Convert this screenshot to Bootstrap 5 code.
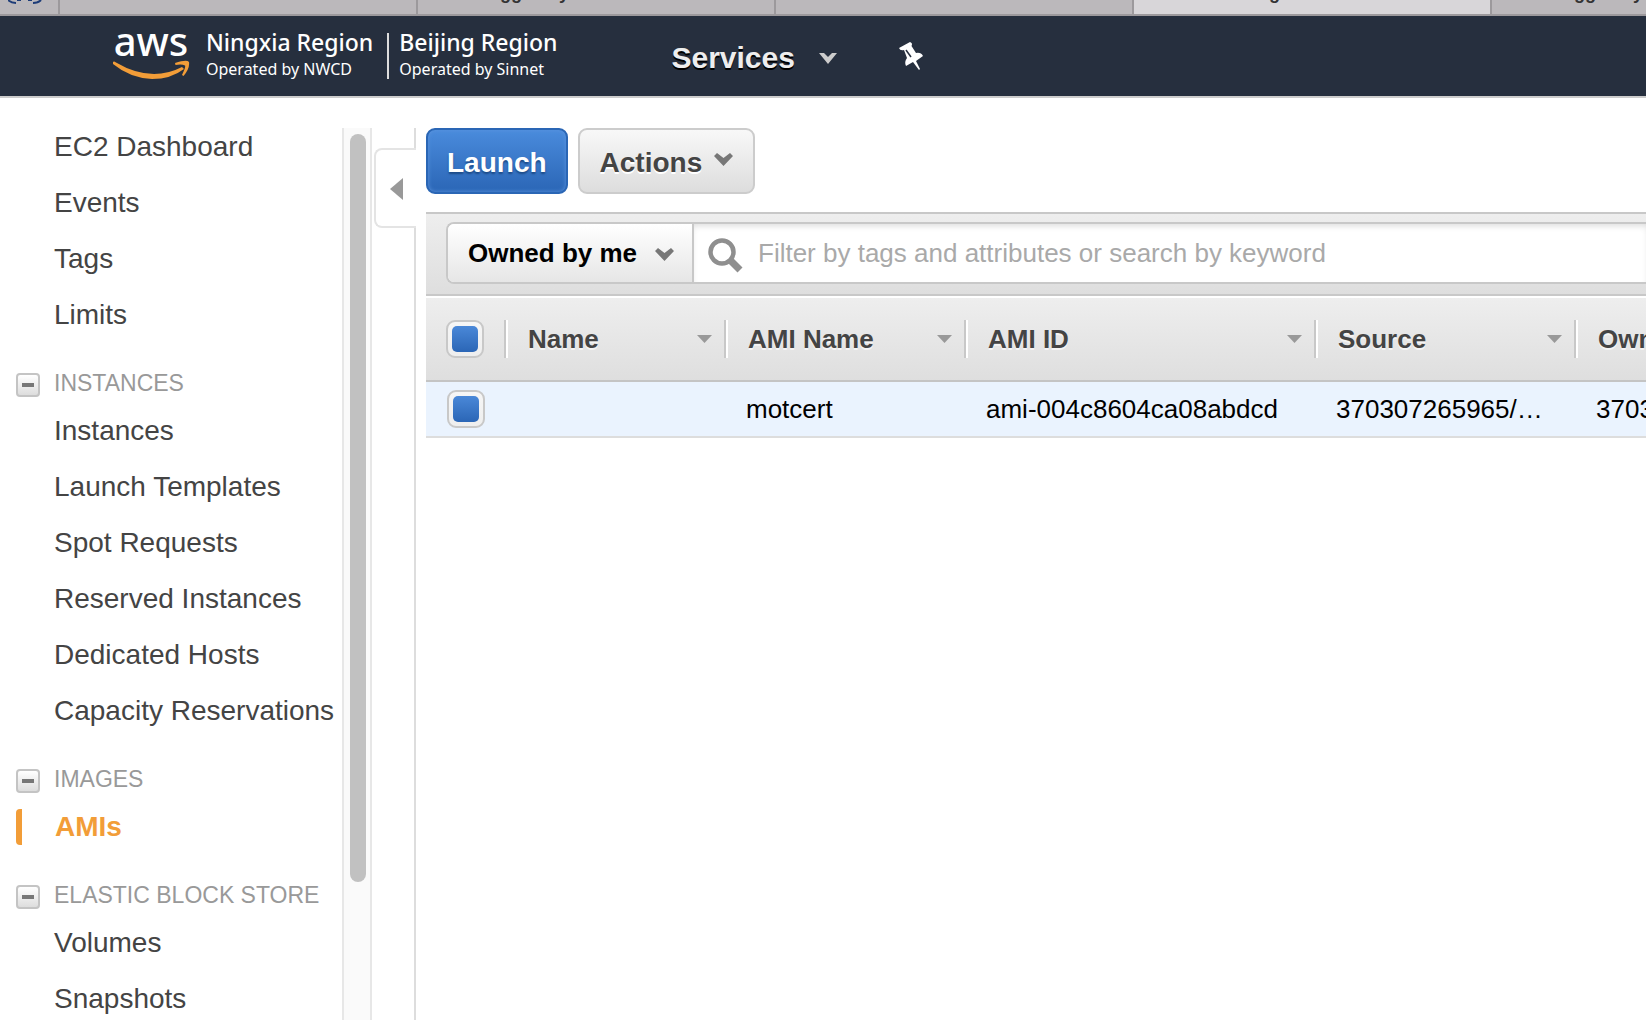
<!DOCTYPE html>
<html lang="en">
<head>
<meta charset="utf-8">
<meta name="viewport" content="width=device-width, initial-scale=1">
<title>EC2 Management Console</title>
<link rel="stylesheet" href="https://cdn.jsdelivr.net/npm/bootstrap@5.3.0/dist/css/bootstrap.min.css">
<style>
body{font-family:"Liberation Sans",Arial,sans-serif;color:#444;background:#fff}
svg{display:block;flex:none}
/* browser tab strip */
.tabstrip{height:16px;background:#bbb8bb;border-bottom:2px solid #9c999c}
.tabstrip a{flex:0 0 358px;border-left:2px solid #9c999c;padding:0 0 11px 60px;font-size:18px;line-height:20px;font-weight:700;color:#333;height:14px}
.tabstrip a.on{background:#d8d6d9;padding-left:94px}
.tabstrip .pinned{flex:0 0 58px;padding-left:8px}
/* top navigation */
.topnav{height:82px;background:#262f3e;border-bottom:2px solid #ccc;padding-left:112px}
.brandfont{font-family:"Noto Sans","Open Sans",sans-serif;color:#fff}
.logo{width:78px;margin-bottom:10px}
.logo-word{font-size:40px;line-height:38px;font-weight:500;text-align:center}
.region-block{margin-bottom:4px}
.region{font-size:23px;line-height:30px;font-weight:500}
.operator{font-size:16px;line-height:25px}
.region-rule{width:2px;height:46px;margin:0 10px 0 14px;background:#ddd}
.services{margin-left:114px;font-size:30px;line-height:36px;font-weight:700;color:#eee;text-shadow:0 2px 0 #000}
.pin{margin-left:62px}
/* sidebar */
.sidebar{flex:0 0 342px;padding-top:21px}
.sidebar a{display:block;font-size:28px;line-height:56px;padding-left:54px;color:#444;text-decoration:none;white-space:nowrap}
.group-head{padding:20px 0 0 16px;gap:14px;font-size:23px;line-height:40px;color:#999}
.toggle-btn{width:24px;height:24px;margin-bottom:6px;border:2px solid #c4c4c4;border-radius:4px;background:linear-gradient(#fff,#ddd)}
.toggle-btn i{width:12px;height:4px;background:#777}
.sidebar a.current{display:flex;align-items:center;padding-left:16px;gap:33px;color:#f29d38;font-weight:700}
.current::before{content:"";width:6px;height:36px;background:#f29d38;border-radius:4px 0 0 4px}
.track{flex:0 0 30px;margin-top:30px;padding:6px 0 0 6px;background:#fafafa;border:solid #e7e7e7;border-width:0 2px}
.thumb{width:16px;height:748px;border-radius:8px;background:#c1c1c1}
.collapser{flex:0 0 44px;margin-top:30px}
.edge{border-right:2px solid #ddd}
.collapse-btn{width:42px;height:80px;border:2px solid #e4e4e4;border-right:0;border-radius:8px 0 0 8px;background:#fff;padding:2px 0 0 14px}
/* main panel */
.panel{padding:30px 0 0 10px;min-width:0}
.actions-row{gap:10px}
.cbtn{height:66px;border:2px solid #ccc;border-radius:9px;padding:3px 20px 0;font-size:28px;font-weight:700;line-height:32px;color:#444;background:linear-gradient(#f8f8f8,#ddd);text-shadow:0 2px 0 #fff}
.cbtn-blue{padding:3px 19px 0;color:#fff;border-color:#2a66b5;background:linear-gradient(#4a8bdc,#2b66b6);text-shadow:0 2px 2px #1c4a86;box-shadow:inset 0 0 4px #5b94de}
.cbtn-menu{gap:12px}
.cbtn-menu svg{margin-bottom:6px}
.filterbar{margin-top:18px;height:84px;padding:8px 0 0 20px;border:solid #c8c8c8;border-width:2px 0;background:linear-gradient(#eee,#dedede)}
.filterbox{height:62px;border:2px solid #c8c8c8;border-right:0;border-radius:8px 0 0 8px;background:#fff;overflow:hidden}
.owner-pick{width:246px;height:58px;border:0;border-right:2px solid #c8c8c8;border-radius:0;appearance:none;background:linear-gradient(#fff,#e6e6e6);padding:0 0 0 20px;font-size:26px;font-weight:700;color:#000}
.pick-arrow{position:absolute;right:20px;top:24px;pointer-events:none}
.search{gap:15px;padding-left:14px;box-shadow:inset 0 4px 6px -2px #ddd}
.search svg{margin-top:4px}
.search input{border:0;outline:0;background:none;font-size:26px;color:#000;height:58px;padding:0;min-width:0}
.search input::placeholder{color:#a9a9a9;opacity:1}
.images{table-layout:fixed;width:100%;min-width:1348px;margin-top:2px;border-collapse:separate;border-spacing:0;font-size:26px;white-space:nowrap}
.images th{height:84px;padding:0;border-bottom:2px solid #c4c4c4}
.images thead{background:linear-gradient(#eee,#dedede)}
.images td{height:56px;padding:0 0 0 22px;background:#eaf3fe;color:#000;border-bottom:2px solid #ddd}
.th-in{height:38px;border-left:2px solid #c8c8c8;box-shadow:inset 2px 0 0 #fff;padding:0 12px 0 22px;text-shadow:0 2px 0 #f4f4f4}
.tick{appearance:none;display:block;width:38px;height:38px;margin:0 0 0 20px;border:2px solid #c8c8c8;border-radius:9px;padding:4px;background:linear-gradient(#f6f6f6,#eee)}
.tick:checked::before{content:"";display:block;width:26px;height:26px;border-radius:5px;background:linear-gradient(#4a88d8,#2b66b6)}
.images td.pick{padding:0 0 0 1px}
</style>
</head>
<body class="vh-100 overflow-hidden d-flex flex-column">

<nav class="tabstrip d-flex overflow-hidden flex-shrink-0" aria-label="Browser tabs">
  <span class="pinned">
    <svg width="34" height="5" viewBox="0 0 34 5" fill="none" stroke="#1d3c78" stroke-width="2"><path d="M0 0Q3 3 8 3M33 0Q30 3 25 3M9 0H13M20 0H24"/></svg>
  </span>
  <a class="d-flex align-items-end text-decoration-none" href="#" aria-label="Tab"></a>
  <a class="d-flex align-items-end text-decoration-none" href="#">Logged by</a>
  <a class="d-flex align-items-end text-decoration-none" href="#" aria-label="Tab"></a>
  <a class="d-flex align-items-end text-decoration-none on" href="#">&nbsp; Images</a>
  <a class="d-flex align-items-end text-decoration-none" href="#">Logged by</a>
</nav>

<header class="topnav d-flex align-items-center flex-shrink-0">
  <a class="logo brandfont text-decoration-none" href="#" aria-label="aws">
    <div class="logo-word">aws</div>
    <svg width="78" height="20" viewBox="0 0 78 20" fill="#f29d38"><path d="M1 2Q2 1 4 2.500Q39 23 70 7L72 9Q59 19 40 19Q18 18 1 4Z"/><path d="M63 3Q75-1 77 2Q78 8 71.500 16L70 15Q74 7 73 5.500Q70 4 63.500 5Z"/></svg>
  </a>
  <div class="region-block brandfont ms-3 text-nowrap">
    <div class="region">Ningxia Region</div>
    <div class="operator">Operated by NWCD</div>
  </div>
  <div class="region-rule"></div>
  <div class="region-block brandfont text-nowrap">
    <div class="region">Beijing Region</div>
    <div class="operator">Operated by Sinnet</div>
  </div>
  <button class="services btn d-flex align-items-center p-0 mt-1 border-0 gap-4" type="button">Services
    <svg width="18" height="11" viewBox="0 0 18 11" fill="#ccc"><path d="M0 0H5L9 4L13 0H18L9 11Z"/></svg>
  </button>
  <button class="pin btn p-0 border-0" type="button" aria-label="Pin services">
    <svg width="24" height="28" viewBox="0 0 24 28" fill="#fff"><path d="M0 6L11 0Q14 1 12.500 4L17 11Q22 10 24 14L17 19L21 27L20 28L14 20L7 24Q5 20 8 16L5 8Q1 9 0 6Z"/><path d="M7 8L12 15" stroke="#262f3e" stroke-width="1.500"/></svg>
  </button>
</header>

<div class="d-flex flex-grow-1 overflow-hidden">
  <nav class="sidebar overflow-hidden" aria-label="EC2">
    <a href="#">EC2 Dashboard</a>
    <a href="#">Events</a>
    <a href="#">Tags</a>
    <a href="#">Limits</a>
    <div class="group-head d-flex align-items-end"><button class="toggle-btn d-flex align-items-center justify-content-center p-0" type="button" aria-label="Collapse Instances"><i></i></button>INSTANCES</div>
    <a href="#">Instances</a>
    <a href="#">Launch Templates</a>
    <a href="#">Spot Requests</a>
    <a href="#">Reserved Instances</a>
    <a href="#">Dedicated Hosts</a>
    <a href="#">Capacity Reservations</a>
    <div class="group-head d-flex align-items-end"><button class="toggle-btn d-flex align-items-center justify-content-center p-0" type="button" aria-label="Collapse Images"><i></i></button>IMAGES</div>
    <a class="current" href="#" aria-current="page">AMIs</a>
    <div class="group-head d-flex align-items-end"><button class="toggle-btn d-flex align-items-center justify-content-center p-0" type="button" aria-label="Collapse Elastic Block Store"><i></i></button>ELASTIC BLOCK STORE</div>
    <a href="#">Volumes</a>
    <a href="#">Snapshots</a>
  </nav>
  <div class="track"><div class="thumb"></div></div>
  <div class="collapser d-flex flex-column align-items-end">
    <div class="edge pt-3 pb-1"></div>
    <button class="collapse-btn d-flex align-items-center flex-shrink-0" type="button" aria-label="Hide navigation">
      <svg width="13" height="22" viewBox="0 0 13 22" fill="#999"><path d="M13 0V22L0 11Z"/></svg>
    </button>
    <div class="edge flex-grow-1"></div>
  </div>

  <main class="panel flex-grow-1 overflow-hidden">
    <div class="d-flex actions-row">
      <button class="cbtn cbtn-blue" type="button">Launch</button>
      <button class="cbtn cbtn-menu d-flex align-items-center" type="button">Actions
        <svg width="19" height="13" viewBox="0 0 19 13" fill="#777"><path d="M0 3L3 0L9.500 5L16 0L19 3L9.500 13Z"/></svg>
      </button>
    </div>
    <div class="filterbar">
      <div class="filterbox d-flex">
        <div class="position-relative">
          <select class="owner-pick" aria-label="Ownership"><option>Owned by me</option></select>
          <svg class="pick-arrow" width="19" height="13" viewBox="0 0 19 13" fill="#777"><path d="M0 3L3 0L9.500 5L16 0L19 3L9.500 13Z"/></svg>
        </div>
        <label class="search d-flex align-items-center flex-grow-1">
          <svg width="35" height="35" viewBox="0 0 35 35" fill="none" stroke="#8f8f8f"><circle cx="14" cy="14" r="11.500" stroke-width="4.500"/><path d="M22 22L32 32" stroke-width="7"/></svg>
          <input class="flex-grow-1" type="text" aria-label="Filter" placeholder="Filter by tags and attributes or search by keyword">
        </label>
      </div>
    </div>
    <table class="images">
      <colgroup><col style="width:78px"><col style="width:220px"><col style="width:240px"><col style="width:350px"><col style="width:260px"><col></colgroup>
      <thead>
        <tr>
          <th><input class="tick" type="checkbox" checked aria-label="Select all"></th>
          <th scope="col"><div class="th-in d-flex align-items-center justify-content-between">Name<svg width="15" height="8" fill="#999"><path d="M0 0H15L7.500 8Z"/></svg></div></th>
          <th scope="col"><div class="th-in d-flex align-items-center justify-content-between">AMI Name<svg width="15" height="8" fill="#999"><path d="M0 0H15L7.500 8Z"/></svg></div></th>
          <th scope="col"><div class="th-in d-flex align-items-center justify-content-between">AMI ID<svg width="15" height="8" fill="#999"><path d="M0 0H15L7.500 8Z"/></svg></div></th>
          <th scope="col"><div class="th-in d-flex align-items-center justify-content-between">Source<svg width="15" height="8" fill="#999"><path d="M0 0H15L7.500 8Z"/></svg></div></th>
          <th scope="col"><div class="th-in d-flex align-items-center justify-content-between">Owner</div></th>
        </tr>
      </thead>
      <tbody>
        <tr>
          <td class="pick"><input class="tick" type="checkbox" checked aria-label="Select motcert"></td>
          <td></td>
          <td>motcert</td>
          <td>ami-004c8604ca08abdcd</td>
          <td>370307265965/…</td>
          <td>370307265965</td>
        </tr>
      </tbody>
    </table>
  </main>
</div>
<script src="https://cdn.jsdelivr.net/npm/bootstrap@5.3.0/dist/js/bootstrap.bundle.min.js"></script>
</body>
</html>
